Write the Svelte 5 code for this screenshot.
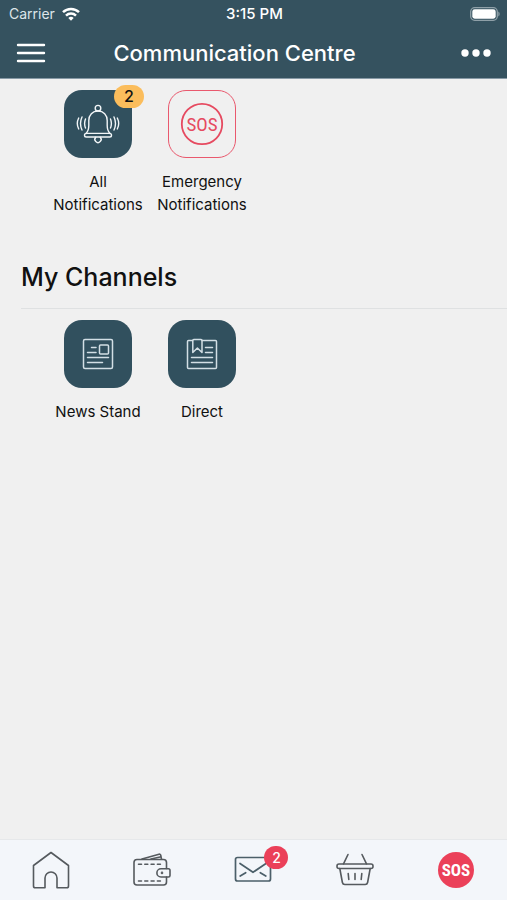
<script>
  const unread = 2;
</script>

<div class="screen">
  <header>
    <div class="status">
      <div class="carrier">
        <span>Carrier</span>
        <svg width="18" height="14" viewBox="0 0 18 14" fill="none" stroke="#fff" stroke-width="2.5" aria-hidden="true">
          <path d="M1 5.2a11.5 11.5 0 0 1 16 0" />
          <path d="M4 8.6a7.2 7.2 0 0 1 10 0" />
          <path d="M9 13.8 6.3 11a3.9 3.9 0 0 1 5.4 0z" fill="#fff" stroke="none" />
        </svg>
      </div>
      <span class="time">3:15 PM</span>
      <svg class="battery" width="30" height="14" viewBox="0 0 30 14" aria-hidden="true">
        <rect x="0.7" y="0.7" width="26.6" height="12.6" rx="4" fill="none" stroke="#8fa0a8" stroke-width="1.3" />
        <rect x="2.3" y="2.3" width="23.4" height="9.4" rx="2.4" fill="#fff" />
        <path d="M28.3 4.6c1.8.8 1.8 4 0 4.8z" fill="#8fa0a8" />
      </svg>
    </div>
    <div class="titlebar">
      <button aria-label="Menu">
        <svg width="30" height="20" viewBox="0 0 30 20" stroke="#fff" stroke-width="2.4" stroke-linecap="round">
          <path d="M2 2h26M2 10h26M2 18h26" />
        </svg>
      </button>
      <h1>Communication Centre</h1>
      <button aria-label="More options">
        <svg width="30" height="8" viewBox="0 0 30 8" fill="#fff">
          <circle cx="4" cy="4" r="3.7" />
          <circle cx="15" cy="4" r="3.7" />
          <circle cx="26" cy="4" r="3.7" />
        </svg>
      </button>
    </div>
  </header>

  <main>
    <div class="tiles">
      <a class="item" href="#all">
        <span class="tile">
          <svg width="44" height="44" viewBox="0 0 44 44" fill="none" stroke="#f2f6f8" stroke-width="1.4" stroke-linecap="round" stroke-linejoin="round" aria-hidden="true">
            <circle cx="22" cy="6.2" r="2.8" />
            <path d="M10 31.4c2-2 2.8-4.400 2.800-8V18.500c0-5.500 3.700-9.500 9.200-9.500s9.200 4 9.200 9.500v4.900c0 3.600.8 6 2.800 8" />
            <rect x="8.500" y="31.400" width="27" height="3.600" rx="1.800" />
            <path d="M19.800 35.200a3.100 3.100 0 1 0 4.400 0" />
            <path d="M9.500 17q-1.800 4.500 0 9M6 15q-3 6.500 0 13M2.700 16q-2.800 5.500 0 11" />
            <path d="M34.500 17q1.800 4.500 0 9M38 15q3 6.500 0 13M41.300 16q2.800 5.500 0 11" />
          </svg>
          <span class="count">{unread}</span>
        </span>
        <span class="label">All Notifications</span>
      </a>
      <a class="item" href="#emergency">
        <span class="tile outline">
          <svg width="44" height="44" viewBox="0 0 44 44" aria-hidden="true">
            <circle cx="22" cy="22" r="20.2" fill="none" stroke="#e64a60" stroke-width="1.8" />
            <text class="sos" x="22" y="29" fill="#e64a60">SOS</text>
          </svg>
        </span>
        <span class="label">Emergency Notifications</span>
      </a>
    </div>

    <section>
      <h2>My Channels</h2>
      <div class="tiles">
        <a class="item" href="#news">
          <span class="tile">
            <svg width="32" height="32" viewBox="0 0 32 32" fill="none" stroke="#d3dfe5" stroke-width="1.5" stroke-linecap="round" stroke-linejoin="round" aria-hidden="true">
              <rect x="1.5" y="1.5" width="29" height="29" rx="1.5" />
              <rect x="17.5" y="7" width="9" height="9" rx="1" />
              <path d="M9.500 9.500h4.500M5.500 14.500H14M5.500 19.500h21M5.500 24.500h15" />
            </svg>
          </span>
          <span class="label">News Stand</span>
        </a>
        <a class="item" href="#direct">
          <span class="tile">
            <svg width="32" height="32" viewBox="0 0 32 32" fill="none" stroke="#d3dfe5" stroke-width="1.5" stroke-linecap="round" stroke-linejoin="round" aria-hidden="true">
              <path d="M6.500 2.500h-4a1 1 0 0 0-1 1v26a1 1 0 0 0 1 1h27a1 1 0 0 0 1-1v-26a1 1 0 0 0-1-1H16" />
              <path d="M6.800 14.500v-12a1 1 0 0 1 1-1h7.200a1 1 0 0 1 1 1v12l-4.600-4.500z" />
              <path d="M19.500 9.500h7M19.500 14.500h7M5.500 19.500h21M5.500 24.500h21" />
            </svg>
          </span>
          <span class="label">Direct</span>
        </a>
      </div>
    </section>
  </main>

  <nav>
    <a href="#home" aria-label="Home">
      <svg width="40" height="40" viewBox="0 0 40 40" fill="none" stroke="#555a5e" stroke-width="1.6" stroke-linejoin="round">
        <path d="M20 2.500 2.500 15.500v20.500a1.800 1.800 0 0 0 1.800 1.800H14V28a6 6 0 0 1 12 0v9.800h9.700a1.800 1.800 0 0 0 1.800-1.800V15.500z" />
      </svg>
    </a>
    <a href="#wallet" aria-label="Wallet">
      <svg width="40" height="40" viewBox="0 0 40 40" fill="none" stroke="#555a5e" stroke-width="1.6" stroke-linecap="round" stroke-linejoin="round">
        <path d="M34.500 18.500V12.500a3 3 0 0 0-3-3H5a3 3 0 0 0-3 3V32a3 3 0 0 0 3 3h26.500a3 3 0 0 0 3-3v-5" />
        <path d="M10 9 27 4.200a1.500 1.500 0 0 1 1.800 1.200l.7 3.800M19 9l9-2" />
        <path d="M38 20.500v5a1.500 1.500 0 0 1-1.500 1.500H29a4 4 0 0 1 0-8.200h7.500a1.600 1.600 0 0 1 1.500 1.700z" />
        <path d="M6.500 14.300h3M12.800 14.300h3M19.100 14.300h3M25.400 14.300h3M6.500 31h3M12.800 31h3M19.100 31h3M25.400 31h3" />
        <circle cx="30" cy="22.9" r="0.5" />
      </svg>
    </a>
    <a href="#messages" aria-label="Messages">
      <svg width="40" height="40" viewBox="0 0 40 40" fill="none" stroke="#4b5f69" stroke-width="1.7" stroke-linecap="round" stroke-linejoin="round">
        <rect x="2.500" y="7.500" width="35" height="23.500" rx="2" />
        <path d="M7 13.500 20 22.300 33 13.500M7.200 26l5.500-3.300M32.800 26l-5.500-3.300" />
      </svg>
      <span class="count red">{unread}</span>
    </a>
    <a href="#basket" aria-label="Basket">
      <svg width="40" height="40" viewBox="0 0 40 40" fill="none" stroke="#555a5e" stroke-width="1.6" stroke-linecap="round" stroke-linejoin="round">
        <rect x="2" y="14" width="36" height="4.500" rx="2" />
        <path d="m4.800 18.500 2.600 14a2.500 2.500 0 0 0 2.500 2h20.200a2.500 2.500 0 0 0 2.500-2l2.600-14M8.500 13.800 13 4.500M31.500 13.800 27 4.500M13.200 23.500l.6 6M20 23.500v6M26.800 23.500l-.6 6" />
      </svg>
    </a>
    <a href="#sos" aria-label="SOS">
      <svg width="40" height="40" viewBox="0 0 40 40">
        <circle cx="20" cy="20" r="18" fill="#eb4059" />
        <text class="sos bold" x="20" y="26" fill="#fff">SOS</text>
      </svg>
    </a>
  </nav>
</div>

<style>
  :global(body) {
    background: #f0f0f0;
  }

  .screen {
    display: flex;
    flex-direction: column;
    min-height: 100vh;
    font-family: Inter, "Liberation Sans", sans-serif;
    color: #111;
  }

  header {
    background: #35525f;
    color: #fff;
    border-bottom: 1px solid #8799a5;
  }

  .status {
    display: grid;
    grid-template-columns: 1fr auto 1fr;
    align-items: center;
    height: 27px;
    padding: 0 7px 0 9px;
    font-size: 14px;
  }

  .carrier {
    display: flex;
    align-items: center;
    gap: 7px;
    color: #dde5e9;
  }

  .time {
    font-size: 15px;
    font-weight: 500;
  }

  .battery {
    justify-self: end;
  }

  .titlebar {
    display: flex;
    align-items: center;
    height: 51px;
    padding: 0 16px;
  }

  h1 {
    flex: 1;
    margin: 0;
    padding-right: 38px;
    font-size: 22px;
    font-weight: 500;
    line-height: 28px;
    text-align: center;
  }

  button {
    display: flex;
    padding: 0;
    border: 0;
    background: none;
    cursor: pointer;
  }

  main {
    flex: 1;
    padding-top: 11px;
  }

  .tiles {
    display: flex;
    flex-wrap: wrap;
    padding: 0 46px;
  }

  .item {
    display: flex;
    flex-direction: column;
    align-items: center;
    gap: 12px;
    width: 104px;
    color: inherit;
    text-decoration: none;
  }

  .tile {
    position: relative;
    display: flex;
    align-items: center;
    justify-content: center;
    box-sizing: border-box;
    width: 68px;
    height: 68px;
    border-radius: 18px;
    background: #31505e;
  }

  .outline {
    border: 1px solid #e9586d;
    background: none;
  }

  .label {
    font-size: 15px;
    line-height: 23px;
    text-align: center;
  }

  .count {
    position: absolute;
    top: -5px;
    right: -12px;
    width: 30px;
    border-radius: 12px;
    background: #fbbd5c;
    font-size: 16px;
    font-weight: 500;
    line-height: 23px;
    text-align: center;
  }

  .red {
    top: 6px;
    left: 50%;
    right: auto;
    width: 24px;
    margin-left: 11px;
    background: #eb4059;
    color: #fff;
    font-size: 14px;
  }

  .sos {
    font-family: "Liberation Sans Narrow", "Roboto Condensed", Roboto, sans-serif;
    font-size: 19px;
    text-anchor: middle;
  }

  .bold {
    font-size: 17px;
    font-weight: 700;
  }

  h2 {
    margin: 45px 0 11px 21px;
    padding-bottom: 15px;
    border-bottom: 1px solid #dfe1e2;
    font-size: 25px;
    font-weight: 500;
    line-height: 32px;
  }

  nav {
    display: grid;
    grid-template-columns: repeat(5, 1fr);
    height: 60px;
    border-top: 1px solid #e6e8ea;
    background: #f3f6fa;
  }

  nav a {
    position: relative;
    display: flex;
    align-items: center;
    justify-content: center;
  }
</style>
